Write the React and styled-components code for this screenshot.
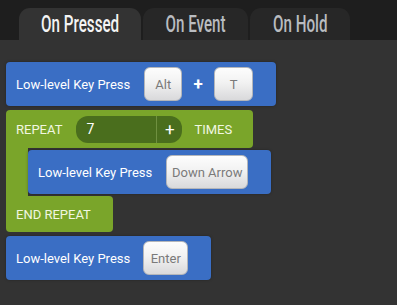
import React from "react";
import styled, { createGlobalStyle } from "styled-components";

const Global = createGlobalStyle`
  html, body { margin: 0; padding: 0; background: #333333; }
  body { font-family: Roboto, "Liberation Sans", sans-serif; }
`;

const Page = styled.div`
  width: 397px;
  height: 305px;
  background: #333333;
  overflow: hidden;
`;

const TabBar = styled.div`
  height: 40px;
  background: #1e1e1e;
  display: flex;
  align-items: flex-end;
  gap: 2px;
  padding-left: 19px;
  box-sizing: border-box;
`;

const Tab = styled.div`
  width: ${(p) => p.$w}px;
  height: 32px;
  border-radius: 11px 11px 0 0;
  background: ${(p) => (p.$active ? "#333333" : "#272727")};
  color: ${(p) => (p.$active ? "#f4f4f4" : "#b9bcc0")};
  display: flex;
  align-items: center;
  justify-content: center;
  font-family: Roboto, "Liberation Sans", sans-serif;
  font-weight: 500;
  font-size: 23px;
`;

const TabLabel = styled.span`
  display: inline-block;
  transform: scaleX(0.66);
  white-space: nowrap;
  margin-top: 1px;
`;

const Workspace = styled.div`
  padding: 22px 0 0 6px;
  display: flex;
  flex-direction: column;
  align-items: flex-start;
  gap: 4px;
`;

const Block = styled.div`
  width: ${(p) => p.$w}px;
  height: 44px;
  box-sizing: border-box;
  background: #3a6ec4;
  border-radius: 4px;
  display: flex;
  align-items: center;
  padding-left: 10px;
  color: #ffffff;
  font-size: 13px;
  box-shadow: 0 0 3px rgba(0, 0, 0, 0.3);
`;

const Label = styled.span`
  white-space: nowrap;
  margin-right: ${(p) => p.$gap}px;
`;

const Key = styled.div`
  width: ${(p) => p.$w}px;
  height: 34px;
  box-sizing: border-box;
  border-radius: 6px;
  border: 1px solid #b4b6ba;
  background: linear-gradient(#fdfdfd, #f2f2f2 45%, #d9d9db);
  color: #7a7a7a;
  font-size: 13px;
  display: flex;
  align-items: center;
  justify-content: center;
  white-space: nowrap;
`;

const Plus = styled.span`
  width: 32px;
  text-align: center;
  font-size: 17px;
  font-weight: 700;
  color: #ffffff;
`;

const Repeat = styled.div`
  display: flex;
  flex-direction: column;
  align-items: flex-start;
`;

const RepeatHead = styled.div`
  width: 247px;
  height: 38px;
  box-sizing: border-box;
  background: #7aa52a;
  border-radius: 4px 4px 4px 0;
  display: flex;
  align-items: center;
  padding-left: 10px;
  color: #f1f7e1;
  font-size: 13px;
`;

const Field = styled.div`
  margin: 0 12px 0 14px;
  width: 106px;
  height: 27px;
  border-radius: 12px;
  background: #4a6e1d;
  display: flex;
  align-items: center;
  color: #ffffff;
  font-size: 14px;
`;

const FieldValue = styled.div`
  flex: 1;
  padding-left: 10px;
  height: 100%;
  display: flex;
  align-items: center;
  border-right: 1px solid #6f9040;
`;

const FieldPlus = styled.div`
  width: 25px;
  text-align: center;
  font-size: 17px;
`;

const RepeatBody = styled.div`
  display: flex;
  align-items: stretch;
`;

const Arm = styled.div`
  width: 22px;
  background: #7aa52a;
`;

const Inner = styled.div`
  padding: 2px 0;
`;

const RepeatFoot = styled.div`
  width: 107px;
  height: 36px;
  box-sizing: border-box;
  background: #7aa52a;
  border-radius: 0 4px 4px 4px;
  display: flex;
  align-items: center;
  padding-left: 10px;
  color: #f1f7e1;
  font-size: 13px;
`;

export default function App() {
  return (
    <Page>
      <Global />
      <TabBar>
        <Tab $active $w={122}>
          <TabLabel>On Pressed</TabLabel>
        </Tab>
        <Tab $w={105}>
          <TabLabel>On Event</TabLabel>
        </Tab>
        <Tab $w={100}>
          <TabLabel>On Hold</TabLabel>
        </Tab>
      </TabBar>
      <Workspace>
        <Block $w={270}>
          <Label $gap={14}>Low-level Key Press</Label>
          <Key $w={38}>Alt</Key>
          <Plus>+</Plus>
          <Key $w={39}>T</Key>
        </Block>
        <Repeat>
          <RepeatHead>
            REPEAT
            <Field>
              <FieldValue>7</FieldValue>
              <FieldPlus>+</FieldPlus>
            </Field>
            TIMES
          </RepeatHead>
          <RepeatBody>
            <Arm />
            <Inner>
              <Block $w={243}>
                <Label $gap={14}>Low-level Key Press</Label>
                <Key $w={82}>Down Arrow</Key>
              </Block>
            </Inner>
          </RepeatBody>
          <RepeatFoot>END REPEAT</RepeatFoot>
        </Repeat>
        <Block $w={205}>
          <Label $gap={13}>Low-level Key Press</Label>
          <Key $w={45}>Enter</Key>
        </Block>
      </Workspace>
    </Page>
  );
}
